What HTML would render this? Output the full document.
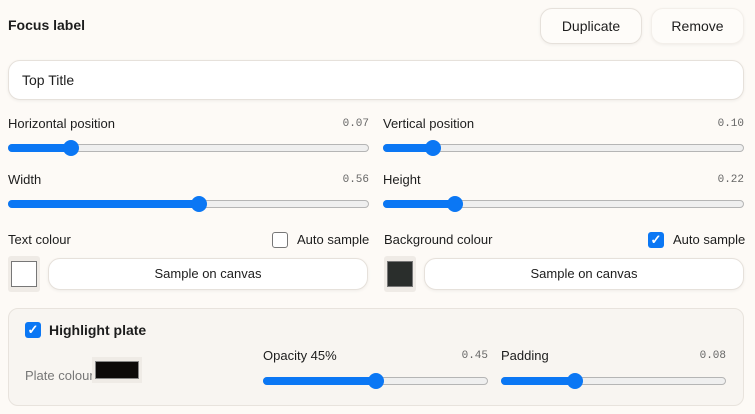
<!DOCTYPE html>
<html><head><meta charset="utf-8"><style>
*{box-sizing:border-box;margin:0;padding:0}
body{width:755px;height:414px;background:#fdfaf6;font-family:"Liberation Sans",sans-serif;color:#1d1d1d;position:relative;overflow:hidden;font-size:13px}
.a{position:absolute}
.btn{position:absolute;background:#fefcf9;border:1px solid #e6e1db;border-radius:12px;box-shadow:0 1px 3px rgba(0,0,0,.06);text-align:center;font-size:14px}
.lbl{position:absolute;font-size:13px;line-height:16px}
.val{position:absolute;font-family:"Liberation Mono",monospace;font-size:11px;color:#666;line-height:16px;text-align:right}
.tr{position:absolute;height:8px;border:1px solid #b5b5b5;border-radius:4px;background:#efefef}
.fill{position:absolute;height:8px;background:#0b77f4;border-radius:4px}
.th{position:absolute;width:16px;height:16px;border-radius:50%;background:#0b77f4}
.cb{position:absolute;width:16px;height:16px;border-radius:3px}
</style></head><body>
<div class="a" style="left:8px;top:17px;font-size:14px;font-weight:bold">Focus label</div>
<div class="btn" style="left:540px;top:8px;width:102px;height:36px;line-height:34px">Duplicate</div>
<div class="btn" style="left:651px;top:8px;width:93px;height:36px;line-height:34px;border-color:#f3efea">Remove</div>
<div class="a" style="left:8px;top:60px;width:736px;height:40px;background:#fff;border:1px solid #e6e1db;border-radius:12px;box-shadow:0 1px 3px rgba(0,0,0,.06);padding-left:13px;line-height:38px;font-size:14px">Top Title</div>

<div class="lbl" style="left:8px;top:116px">Horizontal position</div><div class="val" style="left:300px;width:69px;top:116px">0.07</div>
<div class="tr" style="left:8px;top:144px;width:361px"></div><div class="fill" style="left:8px;top:144px;width:64px"></div><div class="th" style="left:63px;top:140px"></div>
<div class="lbl" style="left:383px;top:116px">Vertical position</div><div class="val" style="left:675px;width:69px;top:116px">0.10</div>
<div class="tr" style="left:383px;top:144px;width:361px"></div><div class="fill" style="left:383px;top:144px;width:51px"></div><div class="th" style="left:425px;top:140px"></div>

<div class="lbl" style="left:8px;top:172px">Width</div><div class="val" style="left:300px;width:69px;top:172px">0.56</div>
<div class="tr" style="left:8px;top:200px;width:361px"></div><div class="fill" style="left:8px;top:200px;width:192px"></div><div class="th" style="left:191px;top:196px"></div>
<div class="lbl" style="left:383px;top:172px">Height</div><div class="val" style="left:675px;width:69px;top:172px">0.22</div>
<div class="tr" style="left:383px;top:200px;width:361px"></div><div class="fill" style="left:383px;top:200px;width:73px"></div><div class="th" style="left:447px;top:196px"></div>

<div class="lbl" style="left:8px;top:232px">Text colour</div>
<div class="cb" style="left:272px;top:232px;border:1px solid #777;background:#fff"></div>
<div class="lbl" style="left:297px;top:232px">Auto sample</div>
<div class="a" style="left:8px;top:256px;width:32px;height:36px;background:#efebe6;border-radius:3px"><div class="a" style="left:3px;top:5px;width:26px;height:26px;background:#fff;border:1px solid #777"></div></div>
<div class="btn" style="left:48px;top:258px;width:320px;height:32px;line-height:30px;font-size:13px;background:#fff">Sample on canvas</div>

<div class="lbl" style="left:384px;top:232px">Background colour</div>
<div class="cb" style="left:648px;top:232px;background:#0b77f4;color:#fff;font-size:13px;line-height:16px;text-align:center;font-weight:bold">✓</div>
<div class="lbl" style="left:673px;top:232px">Auto sample</div>
<div class="a" style="left:384px;top:256px;width:32px;height:36px;background:#efebe6;border-radius:3px"><div class="a" style="left:3px;top:5px;width:26px;height:26px;background:#2a2e2c;border:1px solid #777"></div></div>
<div class="btn" style="left:424px;top:258px;width:320px;height:32px;line-height:30px;font-size:13px;background:#fff">Sample on canvas</div>

<div class="a" style="left:8px;top:308px;width:736px;height:98px;background:#f8f5f1;border:1px solid #e8e3dd;border-radius:10px"></div>
<div class="cb" style="left:25px;top:322px;background:#0b77f4;color:#fff;font-size:13px;line-height:16px;text-align:center;font-weight:bold">✓</div>
<div class="a" style="left:49px;top:321px;font-size:14px;font-weight:bold;line-height:18px">Highlight plate</div>
<div class="lbl" style="left:25px;top:368px;color:#777">Plate colour</div>
<div class="a" style="left:92px;top:357px;width:50px;height:26px;background:#efebe6"><div class="a" style="left:3px;top:4px;width:44px;height:18px;background:#0c0a09;border:1px solid #888"></div></div>
<div class="lbl" style="left:263px;top:348px">Opacity 45%</div><div class="val" style="left:420px;width:68px;top:348px">0.45</div>
<div class="tr" style="left:263px;top:377px;width:225px"></div><div class="fill" style="left:263px;top:377px;width:114px"></div><div class="th" style="left:368px;top:373px"></div>
<div class="lbl" style="left:501px;top:348px">Padding</div><div class="val" style="left:658px;width:68px;top:348px">0.08</div>
<div class="tr" style="left:501px;top:377px;width:225px"></div><div class="fill" style="left:501px;top:377px;width:75px"></div><div class="th" style="left:567px;top:373px"></div>
</body></html>
